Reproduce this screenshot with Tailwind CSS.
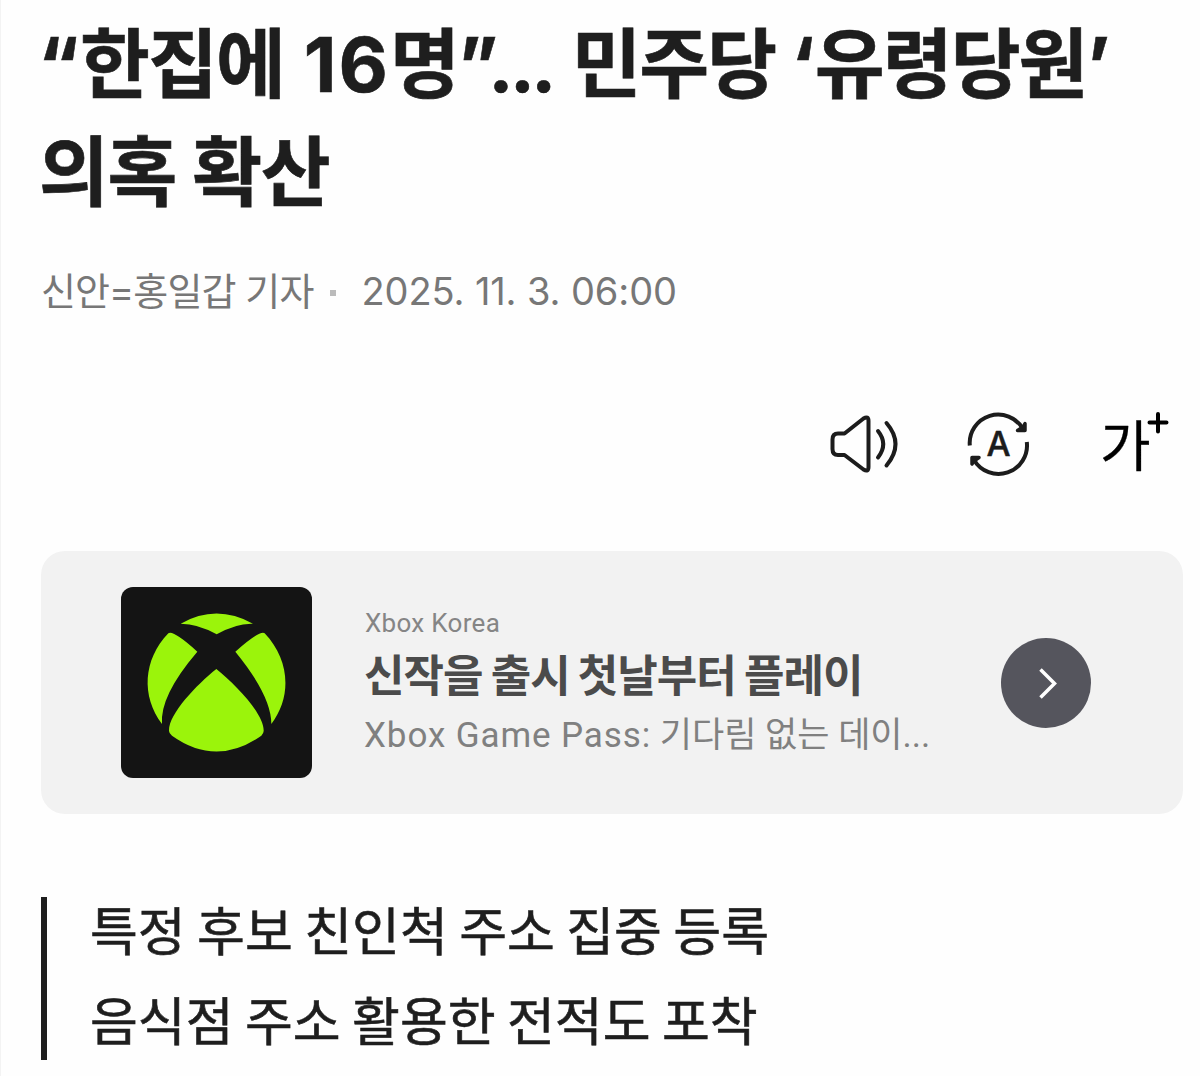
<!DOCTYPE html>
<html lang="ko">
<head>
    <meta charset="UTF-8">
    <meta name="viewport" content="width=device-width, initial-scale=1.0">
    <title>“한집에 16명”... 민주당 ‘유령당원’ 의혹 확산</title>
    <script src="https://cdn.jsdelivr.net/npm/@tailwindcss/browser@4"></script>
</head>
<body class="bg-[#fefefe] font-[Inter,'Noto_Sans_CJK_KR',sans-serif] text-[#1e1e1e]">
    <div class="h-[1076px] overflow-hidden border-l border-[#f3f3f3] pl-10 pr-[17px]">
        <!-- Headline -->
        <header class="pt-[10px]">
            <h1 class="text-[76px] font-bold leading-[108px] tracking-[-2px] whitespace-nowrap [-webkit-text-stroke:0.6px_#1e1e1e]"><span class="-ml-[3px] tracking-[1px]">“</span>한집에 <span class="ml-[4px] tracking-[2px]">16</span>명<span class="tracking-[-10px]">”</span><span class="tracking-[-4px]">...</span> <span class="ml-[3px]">민주당</span> ‘<span class="ml-[2px]">유령당원’</span><br><span class="-ml-[2px] tracking-[-1.5px]">의혹 확산</span></h1>
            <div class="mt-[39px] flex h-[52px] items-center text-[38px] leading-[52px] whitespace-nowrap text-[#777777]">
                <span class="tracking-[-0.9px]">신안=홍일갑 기자</span>
                <span class="ml-[17px] mt-1 size-[6px] bg-[#bbbbbb]"></span>
                <time class="ml-[25px] tracking-[-0.1px]">2025. 11. 3. 06:00</time>
            </div>
        </header>

        <!-- Article tools -->
        <div class="mt-[73px] flex h-[100px] justify-end">
            <svg class="h-[100px] w-[383px]" viewBox="800 390 383 100" fill="none" stroke="#1c1c1c" stroke-width="4" stroke-linecap="round" stroke-linejoin="round">
                <!-- Speaker -->
                <path d="M838 433.500h6.500L863.500 418.500Q868.500 415.500 868.500 421V467Q868.500 472.500 863.500 469.500L844.500 455H838Q832.500 455 832.500 449V439.500Q832.500 433.500 838 433.500Z"/>
                <path d="M878 431Q888.500 444 878 457.500M886.500 423Q904.500 444 886.500 465.500"/>
                <!-- Auto translate -->
                <g stroke-linecap="butt">
                    <path d="M969.800 445.500A28.500 28.500 0 0 1 1023 429"/>
                    <path d="M1026.800 442A28.500 28.500 0 0 1 974 460"/>
                </g>
                <path d="M1025 423.500V430.500H1017.500L1023 427ZM972 464V457.500H979L974 461Z" stroke-width="3.500" fill="#1c1c1c"/>
                <text x="998.500" y="455.500" text-anchor="middle" class="text-[34px] font-medium" fill="#1c1c1c" stroke="#1c1c1c" stroke-width="0.5">A</text>
                <!-- Font size -->
                <text x="1100" y="465.500" class="text-[55px]" fill="#000" stroke="#000" stroke-width="0.3">가</text>
                <path d="M1149.500 422.500H1166.500M1158 414V431.500" stroke="#000" stroke-width="4"/>
            </svg>
        </div>

        <!-- Sponsored card -->
        <section class="mt-[61px] flex h-[263px] items-center rounded-[24px] bg-[#f2f2f2] pl-20 pr-[92px]">
            <div class="flex size-[191px] shrink-0 items-center justify-center rounded-[12px] bg-[#141414]">
                <svg class="size-[191px]" viewBox="64 52 573 573" fill="#9bf40b">
                    <path d="M243 162Q350 101 460 162Q410 160 351 194Q295 162 243 162Z"/>
                    <path d="M206 191Q220 180 293 246Q180 378 187 463C124 380 130 270 206 191Z"/>
                    <path d="M495 191Q482 180 407 246Q515 378 515 463C578 380 570 270 495 191Z"/>
                    <path d="M350 298C290 346 206 434 208 484Q208 491 217 498Q350 593 485 498Q492 491 492 484C494 434 410 346 350 298Z"/>
                </svg>
            </div>
            <div class="ml-[52px] flex w-[580px] flex-col whitespace-nowrap font-[Roboto,'Noto_Sans_CJK_KR',sans-serif]">
                <span class="-mt-px pl-px text-[26px] leading-[36px] tracking-[0.3px] text-[#858585]">Xbox Korea</span>
                <strong class="mt-px text-[44px] leading-[70px] font-bold tracking-[-1px] text-[#4b4b4b] [word-spacing:-1.7px]">신작을 출시 첫날부터 플레이</strong>
                <span class="text-[35px] leading-[48px] text-[#808080]"><span class="tracking-[0.9px]">Xbox Game Pass:</span> 기다림 없는 데이...</span>
            </div>
            <div class="ml-auto flex size-[90px] items-center justify-center rounded-full bg-[#55555d]">
                <svg class="size-[90px]" viewBox="0 0 90 90" fill="none" stroke="#fff" stroke-width="3.500">
                    <path d="M39.500 31.500L53.500 45.500L39.500 59.500"/>
                </svg>
            </div>
        </section>

        <!-- Summary -->
        <div class="mt-[83px] flex h-[163px] flex-col border-l-[6px] border-[#1e1e1e] pl-[43px] text-[52px] leading-[90px] whitespace-nowrap [word-spacing:-3.2px] [-webkit-text-stroke:0.6px_#1e1e1e]">
            <p class="-mt-[9px]">특정 후보 친인척 주소 집중 등록</p>
            <p>음식점 주소 활용한 전적도 포착</p>
        </div>
    </div>
</body>
</html>
